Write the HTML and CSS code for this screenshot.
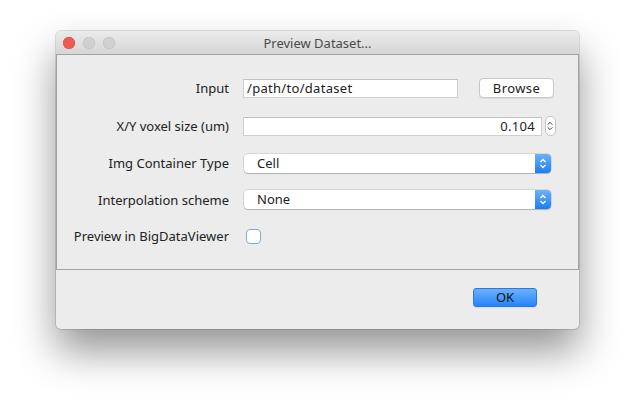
FILE: index.html
```html
<!DOCTYPE html>
<html>
<head>
<meta charset="utf-8">
<link rel="stylesheet" href="styles.css">
</head>
<body>
<div class="window">
  <div class="titlebar">
    <div class="lights">
      <span class="light red"></span>
      <span class="light"></span>
      <span class="light"></span>
    </div>
    <div class="title">Preview Dataset...</div>
  </div>
  <div class="panel">
    <div class="form">
      <div class="label">Input</div>
      <div class="ctrl">
        <div class="field path">/path/to/dataset</div>
        <div class="button browse">Browse</div>
      </div>

      <div class="label">X/Y voxel size (um)</div>
      <div class="ctrl">
        <div class="field num">0.104</div>
        <div class="spinner">
          <svg width="11" height="20" viewBox="0 0 11 20"><path d="M3 8.5 L5.5 6 L8 8.5 M3 11.5 L5.5 14 L8 11.5" fill="none" stroke="#333" stroke-width="1.1"/></svg>
        </div>
      </div>

      <div class="label">Img Container Type</div>
      <div class="ctrl">
        <div class="combo"><span class="combo-text">Cell</span><span class="combo-arrow"><svg width="16" height="19" viewBox="0 0 16 19"><path d="M5.5 8 L8 5.5 L10.5 8 M5.5 11 L8 13.5 L10.5 11" fill="none" stroke="#fff" stroke-width="1.4"/></svg></span></div>
      </div>

      <div class="label">Interpolation scheme</div>
      <div class="ctrl">
        <div class="combo"><span class="combo-text">None</span><span class="combo-arrow"><svg width="16" height="19" viewBox="0 0 16 19"><path d="M5.5 8 L8 5.5 L10.5 8 M5.5 11 L8 13.5 L10.5 11" fill="none" stroke="#fff" stroke-width="1.4"/></svg></span></div>
      </div>

      <div class="label">Preview in BigDataViewer</div>
      <div class="ctrl">
        <div class="checkbox"></div>
      </div>
    </div>
  </div>
  <div class="footer">
    <div class="button ok">OK</div>
  </div>
</div>
</body>
</html>
```

FILE: styles.css
```css
html, body {
  margin: 0;
  padding: 0;
  background: #ffffff;
}
body {
  width: 635px;
  height: 410px;
  overflow: hidden;
  font-family: "Noto Sans", "DejaVu Sans", sans-serif;
  font-size: 13px;
  color: #222;
}
.window {
  margin: 31px 0 0 56px;
  width: 523px;
  height: 298px;
  background: #ececec;
  border-radius: 5px;
  box-shadow: 0 22px 40px rgba(0,0,0,0.42), 0 0 0 1px rgba(0,0,0,0.12);
  display: flex;
  flex-direction: column;
}
.titlebar {
  height: 23px;
  position: relative;
  background: linear-gradient(#ebebeb, #d6d6d6);
  border-radius: 5px 5px 0 0;
  display: flex;
  align-items: center;
  justify-content: center;
}
.lights {
  position: absolute;
  left: 7px;
  top: 6px;
  display: flex;
  gap: 8px;
}
.light {
  width: 12px;
  height: 12px;
  border-radius: 50%;
  background: #d0d0d0;
  box-shadow: inset 0 0 0 0.5px #bdbdbd;
}
.light.red {
  background: #ee5b53;
  box-shadow: inset 0 0 0 0.5px #d8443d;
}
.title {
  font-size: 13px;
  color: #4a4a4a;
  padding-top: 1px;
}
.panel {
  height: 214px;
  border: 1px solid #a3a3a3;
  background: #ececec;
}
.form {
  display: grid;
  grid-template-columns: 172px 1fr;
  grid-template-rows: 38px 38px 36px 37px 36px;
  column-gap: 14px;
  padding-top: 14px;
  align-items: center;
}
.label {
  text-align: right;
  white-space: nowrap;
}
.ctrl {
  display: flex;
  align-items: center;
}
.field {
  height: 19px;
  box-sizing: border-box;
  background: #fff;
  border: 1px solid #cfcfcf;
  border-top-color: #c2c2c2;
  line-height: 17px;
  padding: 0 3px;
}
.field.path {
  width: 215px;
  letter-spacing: 0.3px;
}
.field.num {
  width: 299px;
  text-align: right;
  padding-right: 6px;
  letter-spacing: 0.3px;
}
.button {
  height: 20px;
  box-sizing: border-box;
  background: #fff;
  border: 1px solid #c8c8c8;
  border-radius: 4px;
  box-shadow: 0 1px 0 rgba(0,0,0,0.06);
  text-align: center;
  line-height: 18px;
}
.browse {
  width: 75px;
  margin-left: 21px;
  letter-spacing: 0.4px;
}
.spinner {
  margin-left: 3px;
  width: 11px;
  height: 20px;
  box-sizing: border-box;
  border: 1px solid #c4c4c4;
  border-radius: 5px;
  background: #fff;
  display: flex;
}
.spinner svg {
  margin: -1px 0 0 -1px;
}
.combo {
  margin-left: 1px;
  width: 307px;
  height: 19px;
  box-sizing: border-box;
  background: #fff;
  border-radius: 4px;
  box-shadow: 0 0 0 0.5px rgba(0,0,0,0.18), 0 1px 1px rgba(0,0,0,0.18);
  display: flex;
  align-items: center;
  overflow: hidden;
}
.combo-text {
  flex: 1;
  padding-left: 13px;
  line-height: 19px;
}
.combo-arrow {
  width: 16px;
  height: 19px;
  background: linear-gradient(#6db2fb, #1b7df4);
  display: flex;
}
.checkbox {
  margin-left: 3px;
  width: 15px;
  height: 15px;
  box-sizing: border-box;
  border: 1.5px solid #81a8df;
  border-radius: 4px;
  background: #fff;
}
.footer {
  flex: 1;
  display: flex;
  justify-content: flex-end;
  align-items: flex-start;
  padding: 18px 42px 0 0;
}
.ok {
  width: 64px;
  height: 19px;
  line-height: 17px;
  border: 1px solid #2a78e0;
  background: linear-gradient(#6bb0fd, #2684fa);
  color: #111;
  border-radius: 3px;
}
```
